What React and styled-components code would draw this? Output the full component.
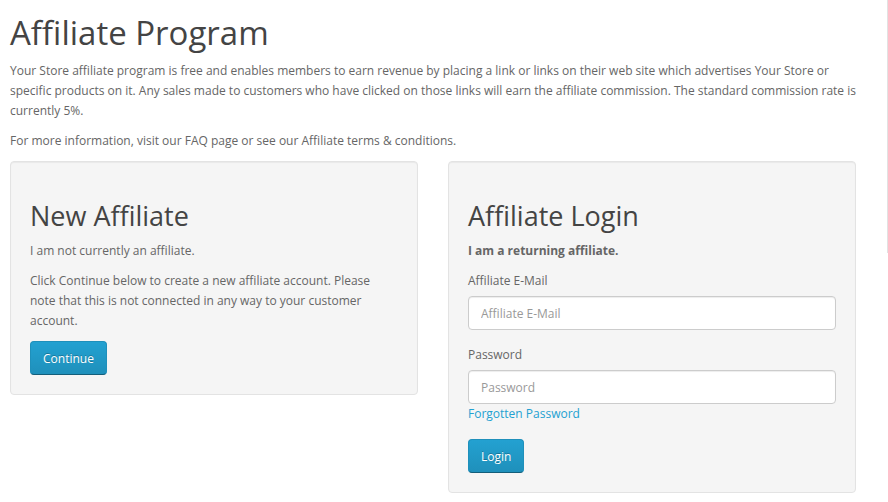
import React from 'react';
import styled, { createGlobalStyle } from 'styled-components';

const GlobalStyle = createGlobalStyle`
  html, body {
    margin: 0;
    padding: 0;
    background: #fff;
  }
  body {
    font-family: 'Open Sans', 'DejaVu Sans', sans-serif;
    font-size: 12px;
    line-height: 20px;
    color: #666;
  }
  * {
    box-sizing: border-box;
  }
`;

const Page = styled.div`
  display: flex;
  align-items: flex-start;
  width: 888px;
`;

const Content = styled.main`
  width: 846px;
  margin-left: 10px;
  padding-top: 15px;
`;

const SideRule = styled.aside`
  flex: 1;
  height: 253px;
  border-right: 1px solid #e2e2e2;
`;

const Title = styled.h1`
  font-size: 33px;
  font-weight: 400;
  line-height: 1.1;
  color: #444;
  margin: 0 0 10px;
`;

const Text = styled.p`
  margin: 0 0 10px;
  font-weight: ${(p) => (p.$bold ? 700 : 400)};
`;

const Columns = styled.div`
  display: flex;
  gap: 30px;
  align-items: flex-start;
`;

const Well = styled.section`
  flex: 1;
  min-height: 20px;
  padding: 19px;
  background-color: #f5f5f5;
  border: 1px solid #e3e3e3;
  border-radius: 4px;
  box-shadow: inset 0 1px 1px rgba(0, 0, 0, 0.05);
`;

const WellTitle = styled.h2`
  font-size: 27px;
  font-weight: 400;
  line-height: 1.1;
  color: #444;
  margin: 20px 0 10px;
`;

const FormGroup = styled.div`
  margin-bottom: 15px;
`;

const Label = styled.label`
  display: inline-block;
  margin-bottom: 5px;
  font-weight: 400;
`;

const Input = styled.input`
  display: block;
  width: 100%;
  height: 34px;
  padding: 7px 12px 5px;
  font-family: inherit;
  font-size: 12px;
  line-height: 1.42857;
  color: #555;
  background-color: #fff;
  border: 1px solid #ccc;
  border-radius: 4px;
  box-shadow: inset 0 1px 1px rgba(0, 0, 0, 0.075);
  outline: none;
  &::placeholder {
    color: #999;
  }
`;

const Link = styled.a`
  color: #23a1d1;
  text-decoration: none;
`;

const PrimaryButton = styled.button`
  display: inline-block;
  padding: 8px 12px 7px;
  font-family: inherit;
  font-size: 12px;
  line-height: 1.42857;
  color: #fff;
  text-shadow: 0 -1px 0 rgba(0, 0, 0, 0.25);
  background-color: #229ac8;
  background-image: linear-gradient(to bottom, #23a1d1, #1f90bb);
  border: 1px solid;
  border-color: #1f90bb #1f90bb #145e7a;
  border-radius: 4px;
  cursor: pointer;
`;

export default function App() {
  return (
    <>
      <GlobalStyle />
      <Page>
        <Content>
          <Title>Affiliate Program</Title>
          <Text>
            Your Store affiliate program is free and enables members to earn revenue by placing a link or links on
            their web site which advertises Your Store or specific products on it. Any sales made to customers who
            have clicked on those links will earn the affiliate commission. The standard commission rate is
            currently 5%.
          </Text>
          <Text>For more information, visit our FAQ page or see our Affiliate terms &amp; conditions.</Text>
          <Columns>
            <Well>
              <WellTitle>New Affiliate</WellTitle>
              <Text>I am not currently an affiliate.</Text>
              <Text>
                Click Continue below to create a new affiliate account. Please note that this is not connected in
                any way to your customer account.
              </Text>
              <PrimaryButton type="button">Continue</PrimaryButton>
            </Well>
            <Well>
              <WellTitle>Affiliate Login</WellTitle>
              <Text $bold>I am a returning affiliate.</Text>
              <FormGroup>
                <Label htmlFor="input-email">Affiliate E-Mail</Label>
                <Input id="input-email" type="text" placeholder="Affiliate E-Mail" />
              </FormGroup>
              <FormGroup>
                <Label htmlFor="input-password">Password</Label>
                <Input id="input-password" type="password" placeholder="Password" />
                <Link href="#">Forgotten Password</Link>
              </FormGroup>
              <PrimaryButton type="button">Login</PrimaryButton>
            </Well>
          </Columns>
        </Content>
        <SideRule />
      </Page>
    </>
  );
}
